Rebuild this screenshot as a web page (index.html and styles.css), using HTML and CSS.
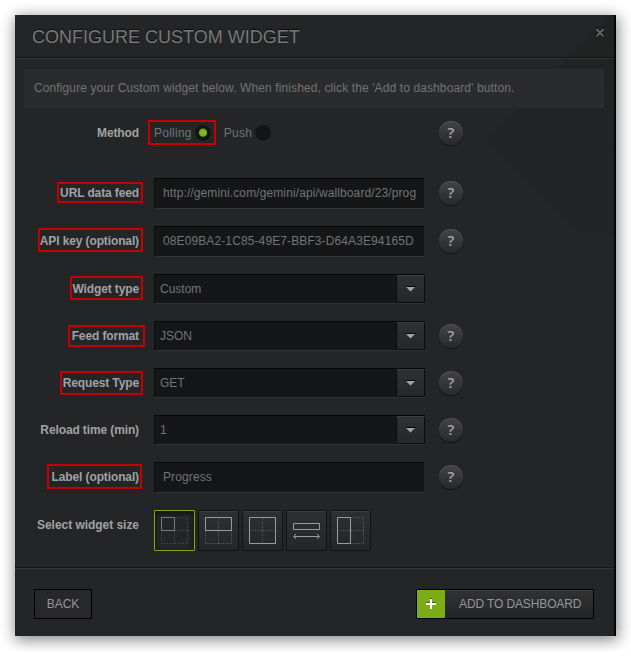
FILE: index.html
```html
<!DOCTYPE html>
<html lang="en">
<head>
<meta charset="utf-8">
<title>Configure Custom Widget</title>
<link rel="stylesheet" href="styles.css">
</head>
<body>
<main class="dialog">
  <header class="head">
    <h1>CONFIGURE CUSTOM WIDGET</h1>
    <svg class="close" width="10" height="10" viewBox="0 0 10 10"><path d="M1 1l8 7M9 1l-8 7" stroke="#050505" stroke-width="2"/><path d="M1.500 2l7 7M8.500 2l-7 7" stroke="#626466" stroke-width="2"/></svg>
  </header>
  <section class="body">
    <p class="notice">Configure your Custom widget below. When finished, click the 'Add to dashboard' button.</p>
    <form class="form">
      <div class="row method">
        <span class="label">Method</span>
        <div class="field radios"><span>Polling</span><i class="radio on"></i><span class="push">Push</span><i class="radio"></i><b class="mark mark-poll"></b></div>
        <span class="help">?</span>
      </div>
      <div class="row tall">
        <span class="label">URL data feed<b class="mark mark-url"></b></span>
        <div class="field input"><span class="clip">http://gemini.com/gemini/api/wallboard/23/prog</span></div>
        <span class="help">?</span>
      </div>
      <div class="row tall">
        <span class="label">API key (optional)<b class="mark mark-api"></b></span>
        <div class="field input"><span class="clip">08E09BA2-1C85-49E7-BBF3-D64A3E94165D</span></div>
        <span class="help">?</span>
      </div>
      <div class="row">
        <span class="label">Widget type<b class="mark mark-widget"></b></span>
        <div class="field select"><span>Custom</span><i class="drop"></i></div>
      </div>
      <div class="row">
        <span class="label">Feed format<b class="mark mark-feed"></b></span>
        <div class="field select"><span>JSON</span><i class="drop"></i></div>
        <span class="help">?</span>
      </div>
      <div class="row">
        <span class="label">Request Type<b class="mark mark-request"></b></span>
        <div class="field select"><span>GET</span><i class="drop"></i></div>
        <span class="help">?</span>
      </div>
      <div class="row">
        <span class="label">Reload time (min)</span>
        <div class="field select"><span>1</span><i class="drop"></i></div>
        <span class="help">?</span>
      </div>
      <div class="row tall">
        <span class="label">Label (optional)<b class="mark mark-label"></b></span>
        <div class="field input"><span class="clip">Progress</span></div>
        <span class="help">?</span>
      </div>
      <div class="row last">
        <span class="label">Select widget size</span>
        <div class="sizes">
          <div class="size active"><svg viewBox="0 0 41 41"><path class="dots" d="M21 7.500H34M33.500 7V34M7 33.500H34M7.500 21V34M20.500 21V34M21 20.500H34"/><path class="line" d="M7.500 7.500h13v13h-13z"/></svg></div>
          <div class="size"><svg viewBox="0 0 41 41"><path class="dots" d="M7.500 21V34M33.500 21V34M7 33.500H34M20.500 9V34"/><path class="line" d="M7.500 7.500h26v13h-26z"/></svg></div>
          <div class="size"><svg viewBox="0 0 41 41"><path class="dots" d="M20.500 9V33M9 20.500H33"/><path class="line" d="M7.500 7.500h26v26h-26z"/></svg></div>
          <div class="size"><svg viewBox="0 0 41 41"><path class="line" d="M7.500 13.500h26v6h-26zM8 26.500H33"/><path class="line" d="M10 24l-2.500 2.500L10 29M31 24l2.500 2.500L31 29"/></svg></div>
          <div class="size"><svg viewBox="0 0 41 41"><path class="dots" d="M21 7.500H34M33.500 7V34M21 33.500H34M9 20.500H34"/><path class="line" d="M7.500 7.500h13v26h-13z"/></svg></div>
        </div>
      </div>
    </form>
  </section>
  <footer class="foot">
    <div class="btn back">BACK</div>
    <div class="btn add"><span class="plus"><svg width="12" height="12" viewBox="0 0 12 12"><path d="M6 0v10M1 5h10" stroke="#416506" stroke-width="2"/><path d="M6 1v10M1 6h10" stroke="#fff" stroke-width="2"/></svg></span><span class="add-text">ADD TO DASHBOARD</span></div>
  </footer>
</main>
</body>
</html>
```
FILE: styles.css
```css
* { box-sizing: border-box; }
body {
  margin: 0;
  padding: 15px;
  background: #fff;
  font: 12px/16px "Liberation Sans", Arial, sans-serif;
  color: #727476;
}
.dialog {
  position: relative;
  isolation: isolate;
  width: 601px;
  height: 621px;
  display: flex;
  flex-direction: column;
  border-right: 2px solid #050607;
  background: #242527;
  box-shadow: 1px 3px 14px 1px rgba(0, 0, 0, .48);
}
/* faint diagonal sheen in the top right corner */
.dialog::before {
  content: "";
  position: absolute;
  z-index: -1;
  top: 0;
  right: 0;
  width: 129px;
  height: 220px;
  background: linear-gradient(#212222, #232426);
  clip-path: polygon(125px 0, 100% 0, 100% 100%, 92px 100%, 0 125px);
}
.head {
  height: 44px;
  padding: 0 9px 0 17px;
  display: flex;
  justify-content: space-between;
  border-bottom: 1px solid #343638;
  box-shadow: inset 0 -1px #111213;
}
h1 {
  margin: 0;
  font-size: 18px;
  line-height: 44px;
  font-weight: 400;
  color: #777a7b;
  text-shadow: 0 -1px #08090a;
}
.close { margin-top: 12px; }
.body { height: 509px; padding: 10px 10px 0 9px; }
.notice {
  margin: 0;
  height: 39px;
  line-height: 39px;
  padding-left: 10px;
  background: #2a2b2d;
  white-space: nowrap;
  letter-spacing: .11px;
}
.row { display: flex; height: 47px; }
.row.tall { height: 48px; }
.row.method { height: 58px; margin-top: 12px; }
.label {
  position: relative;
  width: 115px;
  margin-right: 15px;
  padding-top: 7px;
  text-align: right;
  font-weight: 700;
  color: #a0a2a4;
  white-space: nowrap;
  letter-spacing: -.12px;
}
.method .label { padding-top: 5px; }
.last .label { letter-spacing: -.04px; }
.field { width: 271px; }
.radios { display: flex; height: 25px; align-items: center; position: relative; letter-spacing: .25px; }
.radio {
  width: 16px;
  height: 16px;
  margin-left: 3px;
  border-radius: 50%;
  background: #131415;
  box-shadow: 0 1px #303234;
}
.radio.on { background: radial-gradient(circle at 50% 48%, #8dbd2c 0, #7aab16 3.6px, #131415 4.6px); }
.push { margin-left: 13px; }
.input, .select {
  display: flex;
  background: #151617;
  border-top: 1px solid #050606;
  border-left: 1px solid #0b0c0d;
  border-bottom: 1px solid #303234;
}
.input { height: 31px; width: 270px; margin-right: 1px; padding: 0 8px; line-height: 29px; letter-spacing: .11px; }
.clip { overflow: hidden; white-space: nowrap; }
.select { height: 30px; padding-left: 5px; line-height: 29px; justify-content: space-between; }
.drop {
  width: 29px;
  height: 28px;
  display: flex;
  align-items: center;
  justify-content: center;
  border: 1px solid #0b0c0d;
  border-top-color: #3b3d3f;
  background: linear-gradient(#2e3032, #262729);
}
.drop::before {
  content: "";
  width: 10px;
  height: 6px;
  margin-top: -1px;
  background: linear-gradient(#050505 1px, #a1a3a5 1px);
  clip-path: polygon(0 0, 100% 0, 100% 17%, 50% 100%, 0 17%);
}
.help {
  width: 24px;
  height: 24px;
  margin: 3px 0 0 14px;
  border-radius: 50%;
  background: linear-gradient(#424345, #28292b);
  box-shadow: 0 1px 1px #101112, inset 0 1px #505254;
  font: 600 15px/23px "Open Sans", sans-serif;
  color: #a4a6a8;
  text-align: center;
}
.method .help { margin-top: 1px; }
.mark { position: absolute; border: 2px solid #c40000; }
.mark-poll { left: -6px; top: 0; width: 68px; height: 25px; }
.mark-url { left: 33px; top: 4px; width: 86px; height: 21px; }
.mark-api { left: 14px; top: 2px; width: 105px; height: 24px; }
.mark-widget { left: 46px; top: 2px; width: 73px; height: 24px; }
.mark-feed { left: 44px; top: 4px; width: 77px; height: 22px; }
.mark-request { left: 36px; top: 3px; width: 83px; height: 24px; }
.mark-label { left: 23px; top: 2px; width: 95px; height: 25px; }
.sizes { display: flex; gap: 3px; }
.size {
  width: 41px;
  height: 41px;
  border: 1px solid #111213;
  border-radius: 1px;
  background: linear-gradient(#2d2f31, #252628);
  box-shadow: inset 0 1px #3b3d3f;
}
.size svg { display: block; width: 41px; height: 41px; margin: -1px; }
.size.active { border-color: #79ad16; background: #242527; box-shadow: inset 0 2px 5px #101112; }
.line { fill: none; stroke: #9a9c9e; }
.active .line { stroke: #797b7d; }
.dots { fill: none; stroke: #55575a; stroke-dasharray: 1 1; }
.active .dots { stroke: #46484a; }
.foot {
  height: 68px;
  padding: 20px;
  padding-left: 19px;
  display: flex;
  justify-content: space-between;
  border-top: 1px solid #343638;
  box-shadow: 0 -1px #151617;
}
.btn {
  height: 30px;
  line-height: 29px;
  border: 1px solid #000;
  color: #94979a;
  background: #27282a;
}
.back { width: 58px; text-align: center; }
.add { width: 178px; display: flex; background: linear-gradient(#303234, #242527); box-shadow: inset 0 1px #3c3e40; }
.plus { width: 28px; height: 28px; display: flex; align-items: center; justify-content: center; background: #7cad18; }
.add-text { flex: 1; padding-left: 14px; letter-spacing: -.12px; white-space: nowrap; }
```
